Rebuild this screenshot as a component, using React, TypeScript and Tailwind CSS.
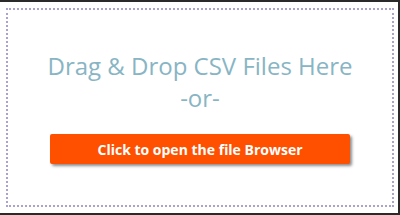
export default function App() {
  return (
    <div className="h-[215px] w-[400px] bg-white border-t-2 border-r-2 border-b-2 border-[#2a2a2a] pt-[6px] pl-[6px] pr-[4px] pb-[6px] font-['Open_Sans',sans-serif]">
      <div className="flex h-full flex-col items-center border-2 border-dotted border-[#a9a4cc] pt-[40px]">
        <p className="text-[24px] leading-[32px] text-[#88b5c4]">Drag &amp; Drop CSV Files Here</p>
        <p className="text-[24px] leading-[32px] text-[#88b5c4]">-or-</p>
        <button
          type="button"
          className="mt-[20px] h-[30px] w-[300px] rounded-[2px] bg-[#ff5000] text-[14px] font-bold text-white shadow-[2px_2px_3px_rgba(0,0,0,0.45)]"
        >
          Click to open the file Browser
        </button>
      </div>
    </div>
  );
}
